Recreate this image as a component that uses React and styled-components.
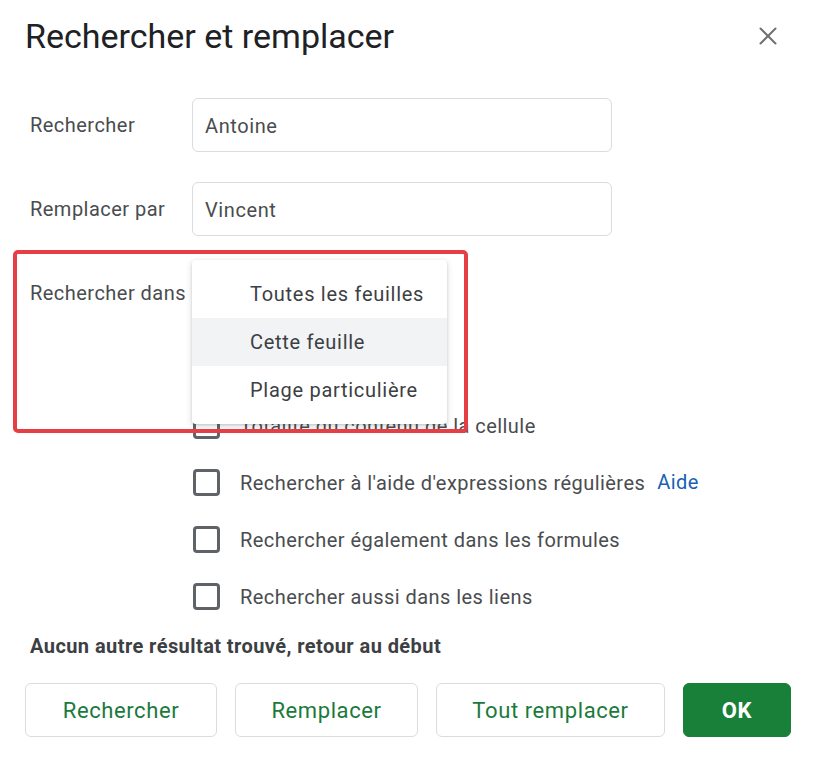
import React from 'react';
import styled, { createGlobalStyle } from 'styled-components';
import { X } from 'lucide-react';

const GlobalStyle = createGlobalStyle`
    html, body {
        margin: 0;
        background: #ffffff;
    }
    body {
        font-family: Roboto, "Liberation Sans", sans-serif;
    }
`;

const Dialog = styled.div`
    position: relative;
    width: 813px;
    height: 762px;
    box-sizing: border-box;
    padding: 15px 22px 0 25px;
    background: #fff;
    overflow: hidden;
`;

const Header = styled.div`
    display: flex;
    justify-content: space-between;
    align-items: center;
    height: 42px;
    margin-bottom: 41px;
`;

const Title = styled.h1`
    margin: 0;
    font-size: 34px;
    font-weight: 400;
    color: #202124;
`;

const CloseButton = styled.button`
    display: flex;
    padding: 0;
    margin-right: 8px;
    border: 0;
    background: none;
    color: #6f7175;
`;

const Form = styled.div`
    display: flex;
    flex-direction: column;
    gap: 30px;
    padding-left: 5px;
`;

const Row = styled.div`
    display: flex;
    align-items: center;
    height: 54px;
`;

const Label = styled.label`
    width: 162px;
    font-size: 20px;
    letter-spacing: 0.47px;
    color: #4a4c4f;
    white-space: nowrap;
`;

const TextField = styled.div`
    display: flex;
    align-items: center;
    width: 420px;
    height: 54px;
    box-sizing: border-box;
    padding: 2px 12px 0;
    border: 1px solid #dadce0;
    border-radius: 6px;
    font-size: 20px;
    letter-spacing: 0.6px;
    color: #4a4c4f;
`;

const Options = styled.div`
    display: flex;
    flex-direction: column;
    gap: 27px;
    margin-top: 90px;
    padding-left: 168px;
`;

const Option = styled.div`
    display: flex;
    align-items: center;
    height: 30px;
    font-size: 20px;
    letter-spacing: 0.45px;
    color: #4a4c4f;
`;

const OptionText = styled.span`
    padding-top: 2px;
`;

const CheckBox = styled.span`
    flex: none;
    width: 27px;
    height: 27px;
    box-sizing: border-box;
    margin-right: 20px;
    border: 3px solid #5f6368;
    border-radius: 4px;
`;

const HelpLink = styled.a`
    margin-left: 12px;
    color: #1a5fb4;
`;

const Status = styled.div`
    margin: 20px 0 0 5px;
    height: 30px;
    line-height: 30px;
    font-size: 20px;
    font-weight: 700;
    letter-spacing: 0.43px;
    color: #3c4043;
`;

const Actions = styled.div`
    display: flex;
    margin-top: 22px;
`;

const Button = styled.button`
    width: ${(p) => p.$width}px;
    height: 54px;
    margin-right: ${(p) => p.$gap}px;
    padding: 0;
    box-sizing: border-box;
    border: 1px solid ${(p) => (p.$primary ? '#188038' : '#dadce0')};
    border-radius: 6px;
    background: ${(p) => (p.$primary ? '#188038' : '#fff')};
    color: ${(p) => (p.$primary ? '#fff' : '#1a7a3c')};
    font-family: inherit;
    font-size: 22px;
    font-weight: ${(p) => (p.$primary ? 700 : 400)};
    letter-spacing: 0.6px;
`;

const Menu = styled.div`
    position: absolute;
    left: 192px;
    top: 260px;
    width: 255px;
    height: 164px;
    box-sizing: border-box;
    padding: 10px 0;
    background: #fff;
    border-radius: 4px;
    box-shadow: 0 2px 6px rgba(60, 64, 67, 0.22), 0 1px 2px rgba(60, 64, 67, 0.15);
`;

const MenuItem = styled.div`
    display: flex;
    align-items: center;
    height: 48px;
    padding-left: 58px;
    font-size: 20px;
    letter-spacing: 0.72px;
    color: #3c4043;
    background: ${(p) => (p.$active ? '#f1f3f4' : 'transparent')};
`;

const Highlight = styled.div`
    position: absolute;
    left: 13px;
    top: 250px;
    width: 455px;
    height: 183px;
    box-sizing: border-box;
    border: 4px solid #e53f45;
    border-radius: 5px;
    pointer-events: none;
`;

const App = () => {
    return (
        <Dialog>
            <GlobalStyle />
            <Header>
                <Title>Rechercher et remplacer</Title>
                <CloseButton aria-label="Fermer">
                    <X size={30} strokeWidth={1.6} />
                </CloseButton>
            </Header>
            <Form>
                <Row>
                    <Label>Rechercher</Label>
                    <TextField>Antoine</TextField>
                </Row>
                <Row>
                    <Label>Remplacer par</Label>
                    <TextField>Vincent</TextField>
                </Row>
                <Row>
                    <Label>Rechercher dans</Label>
                </Row>
            </Form>
            <Options>
                <Option><CheckBox /><OptionText>Totalité du contenu de la cellule</OptionText></Option>
                <Option>
                    <CheckBox /><OptionText>Rechercher à l'aide d'expressions régulières</OptionText>
                    <HelpLink>Aide</HelpLink>
                </Option>
                <Option><CheckBox /><OptionText>Rechercher également dans les formules</OptionText></Option>
                <Option><CheckBox /><OptionText>Rechercher aussi dans les liens</OptionText></Option>
            </Options>
            <Status>Aucun autre résultat trouvé, retour au début</Status>
            <Actions>
                <Button $width={192} $gap={18}>Rechercher</Button>
                <Button $width={183} $gap={18}>Remplacer</Button>
                <Button $width={229} $gap={18}>Tout remplacer</Button>
                <Button $width={108} $gap={0} $primary>OK</Button>
            </Actions>
            <Menu>
                <MenuItem>Toutes les feuilles</MenuItem>
                <MenuItem $active>Cette feuille</MenuItem>
                <MenuItem>Plage particulière</MenuItem>
            </Menu>
            <Highlight />
        </Dialog>
    );
};

export default App;
